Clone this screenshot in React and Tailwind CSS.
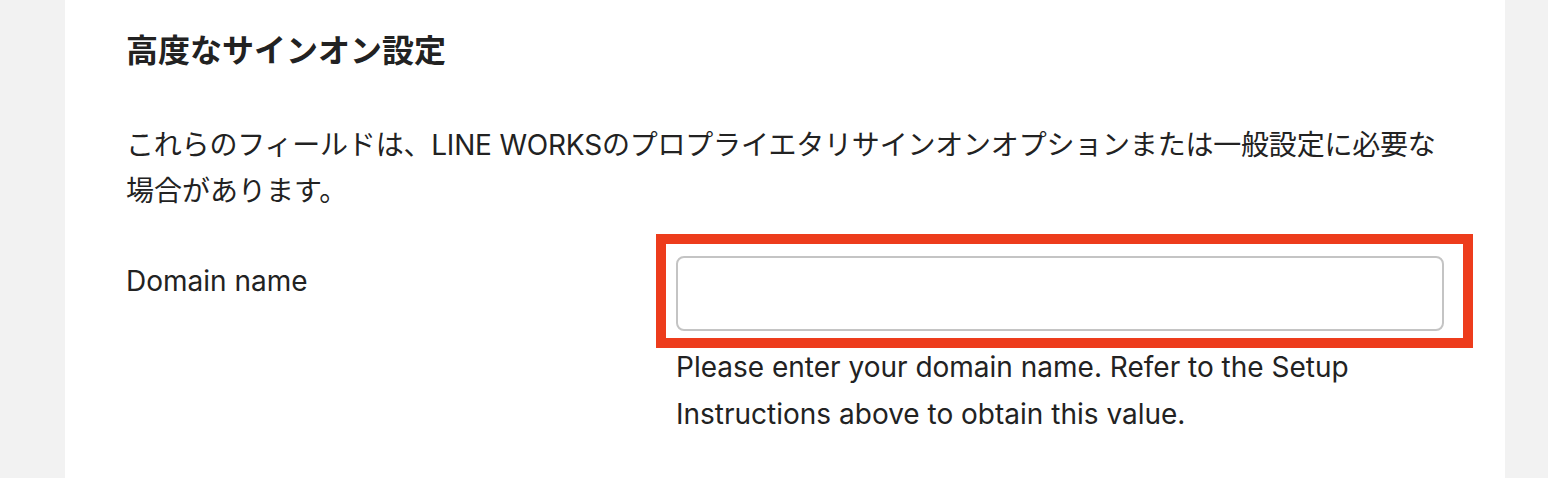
export default function App() {
  const font = { fontFamily: 'Inter, "Noto Sans CJK JP", sans-serif' };
  return (
    <div className="min-h-screen w-[1548px] bg-[#f2f2f2] pl-[65px]" style={font}>
      <div className="w-[1440px] min-h-[478px] bg-white px-[61px] pt-[31px] text-[#222222]">
        <h2 className="text-[32px] leading-[40px] font-bold">高度なサインオン設定</h2>
        <p className="mt-[51px] text-[28px] leading-[46px]">
          <span className="whitespace-nowrap tracking-[-0.2px]">
            これらのフィールドは、LINE WORKSのプロプライエタリサインオンオプションまたは一般設定に必要な
          </span>
          <br />
          場合があります。
        </p>
        <div className="mt-[42px] grid grid-cols-[550px_768px]">
          <div className="pt-[2px] text-[28px] leading-[46px]">Domain name</div>
          <div>
            <div className="relative">
              <input
                type="text"
                className="block h-[75px] w-[768px] rounded-[8px] border-2 border-[#c4c4c4] bg-white px-4 text-[28px] outline-none"
              />
              <div className="pointer-events-none absolute left-[-20px] top-[-22px] h-[114px] w-[817px] border-[10px] border-[#ed3c1c]" />
            </div>
            <p className="mt-[13px] text-[28px] leading-[47px]">
              Please enter your domain name. Refer to the Setup Instructions above to obtain this value.
            </p>
          </div>
        </div>
      </div>
    </div>
  );
}
